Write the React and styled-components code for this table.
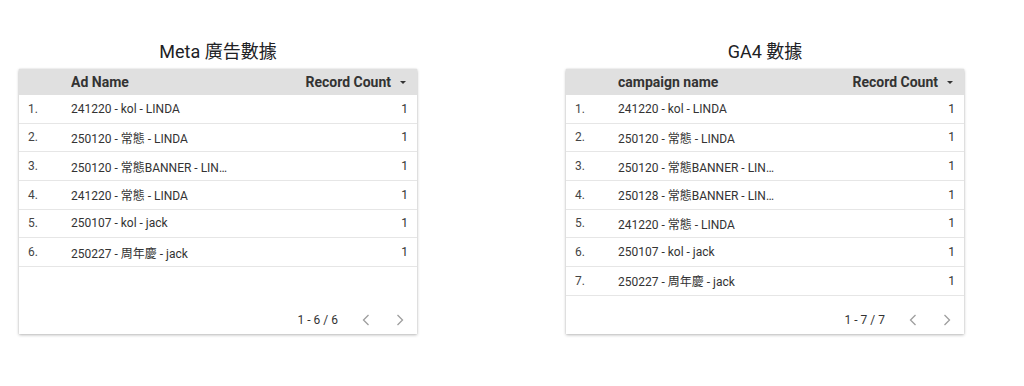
import styled, { createGlobalStyle } from 'styled-components';

const GlobalStyle = createGlobalStyle`
  body {
    margin: 0;
    background: #ffffff;
    font-family: Roboto, "Noto Sans CJK TC", "Noto Sans", sans-serif;
  }
`

const Page = styled.div`
  display: flex;
  gap: 149px;
  padding: 41px 0 0 19px;
  height: 386px;
  box-sizing: border-box;
`

const Panel = styled.section`
  width: 398px;
  display: flex;
  flex-direction: column;
`

const Title = styled.h2`
  margin: 0 0 6px;
  height: 22px;
  line-height: 22px;
  text-align: center;
  font-size: 18px;
  font-weight: 400;
  color: #202124;
`

const Card = styled.div`
  background: #fff;
  box-shadow: 0 1px 3px rgba(0, 0, 0, 0.28), 0 0 1px rgba(0, 0, 0, 0.12);
  display: flex;
  flex-direction: column;
  font-size: 12px;
  color: #333;
`

const HeaderRow = styled.div`
  display: flex;
  align-items: center;
  height: 26px;
  background: #e0e0e0;
  font-weight: 700;
  font-size: 14px;
  color: #333;
  padding: 0 9px;
`

const Body = styled.div`
  height: 201px;
`

const Row = styled.div`
  display: flex;
  align-items: center;
  height: 28.67px;
  box-sizing: border-box;
  border-bottom: 1px solid #e6e6e6;
  padding: 0 9px;
`

const Index = styled.div`
  width: 43px;
  flex: none;
  color: #444;
`

const Name = styled.div`
  width: 160px;
  flex: none;
  white-space: nowrap;
  overflow: hidden;
  text-overflow: ellipsis;
`

const Count = styled.div`
  flex: 1;
  text-align: right;
  display: flex;
  justify-content: flex-end;
  align-items: center;
  gap: 9px;
`

const SortArrow = styled.span`
  width: 0;
  height: 0;
  border-left: 3px solid transparent;
  border-right: 3px solid transparent;
  border-top: 3px solid #333;
  margin-right: 2px;
`

const Footer = styled.div`
  height: 38px;
  display: flex;
  justify-content: flex-end;
  align-items: flex-end;
  padding: 0 0 6px 0;
  box-sizing: border-box;
`

const PageInfo = styled.span`
  font-size: 12px;
  color: #333;
  line-height: 16px;
  margin-right: 11px;
`

const NavButton = styled.span`
  width: 34px;
  height: 16px;
  display: flex;
  align-items: center;
  justify-content: center;
`

const Chevron = ({ dir }) => (
  <svg width="8" height="12" viewBox="0 0 8 12">
    <path
      d={dir === 'left' ? 'M6.5 1 L1.5 6 L6.5 11' : 'M1.5 1 L6.5 6 L1.5 11'}
      fill="none"
      stroke="#9e9e9e"
      strokeWidth="1.3"
    />
  </svg>
)

const Table = ({ title, column, rows }) => (
  <Panel>
    <Title>{title}</Title>
    <Card>
      <HeaderRow>
        <Index />
        <Name>{column}</Name>
        <Count>
          Record Count
          <SortArrow />
        </Count>
      </HeaderRow>
      <Body>
        {rows.map((r, i) => (
          <Row key={i}>
            <Index>{i + 1}.</Index>
            <Name>{r}</Name>
            <Count>1</Count>
          </Row>
        ))}
      </Body>
      <Footer>
        <PageInfo>1 - {rows.length} / {rows.length}</PageInfo>
        <NavButton><Chevron dir="left" /></NavButton>
        <NavButton><Chevron dir="right" /></NavButton>
      </Footer>
    </Card>
  </Panel>
)

const metaRows = [
  '241220 - kol - LINDA',
  '250120 - 常態 - LINDA',
  '250120 - 常態BANNER - LINDA',
  '241220 - 常態 - LINDA',
  '250107 - kol - jack',
  '250227 - 周年慶 - jack',
]

const gaRows = [
  '241220 - kol - LINDA',
  '250120 - 常態 - LINDA',
  '250120 - 常態BANNER - LINDA',
  '250128 - 常態BANNER - LINDA',
  '241220 - 常態 - LINDA',
  '250107 - kol - jack',
  '250227 - 周年慶 - jack',
]

const App = () => (
  <>
    <GlobalStyle />
    <Page>
      <Table title="Meta 廣告數據" column="Ad Name" rows={metaRows} />
      <Table title="GA4 數據" column="campaign name" rows={gaRows} />
    </Page>
  </>
)

export default App;
